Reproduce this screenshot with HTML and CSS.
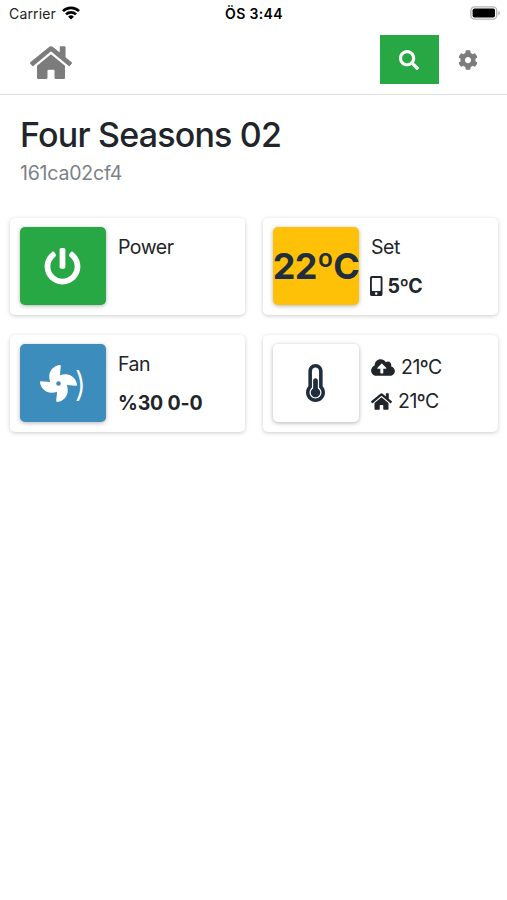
FILE: index.html
```html
<!DOCTYPE html>
<html lang="en">
<head>
<meta charset="utf-8">
<title>Four Seasons 02</title>
<link rel="stylesheet" href="styles.css">
</head>
<body>
<svg class="symbols" aria-hidden="true">
  <symbol id="home" viewBox="0 0 576 512"><path d="M280.37 148.26L96 300.11V464a16 16 0 0 0 16 16l112.06-.29a16 16 0 0 0 15.92-16V368a16 16 0 0 1 16-16h64a16 16 0 0 1 16 16v95.64a16 16 0 0 0 16 16.05L464 480a16 16 0 0 0 16-16V300L295.67 148.26a12.19 12.19 0 0 0-15.3 0zM571.6 251.47L488 182.56V44.05a12 12 0 0 0-12-12h-56a12 12 0 0 0-12 12v72.61L318.47 43a48 48 0 0 0-61 0L4.34 251.47a12 12 0 0 0-1.6 16.9l25.5 31A12 12 0 0 0 45.15 301l235.22-193.74a12.19 12.19 0 0 1 15.3 0L530.9 301a12 12 0 0 0 16.9-1.6l25.5-31a12 12 0 0 0-1.7-16.93z"/></symbol>
</svg>
<div class="status">
  <div class="carrier"><span>Carrier</span>
    <svg class="wifi" viewBox="0 0 18 14" fill="none" stroke="#000" stroke-width="2.7"><path d="M1 5.1a11.3 11.3 0 0 1 16 0M4 8.4a7.1 7.1 0 0 1 10 0"/><path d="M9 13.6L6.1 10.8a4.1 4.1 0 0 1 5.8 0z" fill="#000" stroke="none"/></svg>
  </div>
  <div class="clock">ÖS 3:44</div>
  <svg class="battery" viewBox="0 0 31 14"><rect x=".9" y=".9" width="25.8" height="12.2" rx="3.6" fill="#fff" stroke="#b4b4b4" stroke-width="1.4"/><rect x="2.6" y="2.5" width="22.4" height="9" rx="1.8" fill="#000"/><path d="M28.4 5v4.2c2-.7 2-3.5 0-4.2z" fill="#aaa"/></svg>
</div>
<header class="navbar">
  <svg class="nav-home"><use href="#home"/></svg>
  <div class="search"><svg viewBox="0 0 512 512"><path d="M505 442.7L405.3 343c-4.5-4.5-10.6-7-17-7H372c27.6-35.3 44-79.7 44-128C416 93.1 322.9 0 208 0S0 93.1 0 208s93.1 208 208 208c48.3 0 92.7-16.4 128-44v16.3c0 6.4 2.5 12.5 7 17l99.7 99.7c9.4 9.4 24.6 9.4 33.9 0l28.3-28.3c9.4-9.4 9.4-24.6.1-34zM208 336c-70.7 0-128-57.2-128-128 0-70.7 57.2-128 128-128 70.7 0 128 57.2 128 128 0 70.7-57.2 128-128 128z"/></svg></div>
  <svg class="cog" viewBox="0 0 512 512"><path d="M487.4 315.7l-42.6-24.6c4.3-23.2 4.3-47 0-70.2l42.6-24.6c4.9-2.8 7.1-8.6 5.5-14-11.1-35.6-30-67.8-54.7-94.6-3.8-4.1-10-5.1-14.8-2.3L380.8 110c-17.9-15.4-38.5-27.3-60.8-35.1V25.8c0-5.6-3.9-10.5-9.4-11.7-36.7-8.2-74.3-7.8-109.2 0-5.5 1.2-9.4 6.1-9.4 11.7V75c-22.2 7.9-42.8 19.8-60.8 35.1L88.7 85.5c-4.9-2.8-11-1.9-14.8 2.3-24.7 26.7-43.6 58.9-54.7 94.6-1.7 5.4.6 11.2 5.5 14L67.3 221c-4.3 23.2-4.3 47 0 70.2l-42.6 24.6c-4.9 2.8-7.1 8.6-5.5 14 11.1 35.6 30 67.8 54.7 94.6 3.8 4.1 10 5.1 14.8 2.3l42.6-24.6c17.9 15.4 38.5 27.3 60.8 35.1v49.2c0 5.6 3.9 10.5 9.4 11.7 36.7 8.2 74.3 7.8 109.2 0 5.5-1.2 9.4-6.1 9.4-11.7v-49.2c22.2-7.9 42.8-19.8 60.8-35.1l42.6 24.6c4.9 2.8 11 1.9 14.8-2.3 24.7-26.7 43.6-58.9 54.7-94.6 1.5-5.5-.7-11.3-5.6-14.1zM256 336c-44.1 0-80-35.9-80-80s35.9-80 80-80 80 35.9 80 80-35.9 80-80 80z"/></svg>
</header>
<main>
  <h1>Four Seasons 02</h1>
  <p class="device">161ca02cf4</p>
  <div class="cards">
    <section class="card">
      <div class="tile green"><svg class="power" viewBox="0 0 512 512"><path d="M400 54.1c63 45 104 118.6 104 201.9 0 136.8-110.8 247.7-247.5 248C120 504.3 8.2 393 8 256.4 7.9 173.1 48.9 99.3 111.8 54.2c11.7-8.3 28-4.8 35 7.7L162.6 90c5.9 10.5 3.1 23.8-6.6 31-41.5 30.8-68 79.6-68 134.9-.1 92.3 74.5 168.1 168 168.1 91.6 0 168.6-74.2 168-169.1-.3-51.8-24.7-101.8-68.1-134-9.7-7.2-12.4-20.5-6.5-30.9l15.8-28.1c7-12.4 23.2-16.1 34.8-7.8zM296 264V24c0-13.3-10.7-24-24-24h-32c-13.3 0-24 10.7-24 24v240c0 13.3 10.7 24 24 24h32c13.3 0 24-10.7 24-24z"/></svg></div>
      <div class="info"><div class="label">Power</div></div>
    </section>
    <section class="card">
      <div class="tile yellow"><span class="target">22ºC</span></div>
      <div class="info"><div class="label">Set</div>
        <div class="value"><svg class="mobile" viewBox="0 0 320 512"><path d="M272 0H48C21.5 0 0 21.5 0 48v416c0 26.5 21.5 48 48 48h224c26.5 0 48-21.5 48-48V48c0-26.5-21.5-48-48-48zM160 480c-17.7 0-32-14.3-32-32s14.3-32 32-32 32 14.3 32 32-14.3 32-32 32zm112-108c0 6.6-5.4 12-12 12H60c-6.6 0-12-5.4-12-12V60c0-6.6 5.4-12 12-12h200c6.6 0 12 5.4 12 12v312z"/></svg><span>5ºC</span></div></div>
    </section>
    <section class="card">
      <div class="tile blue"><svg class="fan" viewBox="0 0 512 512"><path d="M352.57 128c-28.09 0-54.09 4.52-77.06 12.86l12.41-123.11C289 7.31 279.81-1.18 269.33.13 189.63 10.13 128 77.64 128 159.43c0 28.09 4.52 54.09 12.86 77.06L17.75 224.08C7.31 223-1.18 232.19.13 242.67c10 79.7 77.51 141.33 159.3 141.33 28.09 0 54.09-4.52 77.06-12.86l-12.41 123.11c-1.05 10.43 8.11 18.93 18.59 17.62 79.7-10 141.33-77.51 141.33-159.3 0-28.09-4.52-54.09-12.86-77.06l123.11 12.41c10.44 1.05 18.93-8.11 17.62-18.59-10-79.7-77.51-141.33-159.3-141.33zM256 288a32 32 0 1 1 32-32 32 32 0 0 1-32 32z"/></svg><span class="paren">)</span></div>
      <div class="info"><div class="label">Fan</div><div class="value speed">%30 0-0</div></div>
    </section>
    <section class="card">
      <div class="tile white"><svg class="thermo" viewBox="0 0 256 512"><path d="M192 384c0 35.346-28.654 64-64 64s-64-28.654-64-64c0-23.685 12.876-44.349 32-55.417V224c0-17.673 14.327-32 32-32s32 14.327 32 32v104.583c19.124 11.068 32 31.732 32 55.417zm32-84.653c19.912 22.563 32 52.194 32 84.653 0 70.696-57.303 128-128 128-.299 0-.609-.001-.909-.003C56.789 511.509-.357 453.636.002 383.333.166 351.135 12.225 321.755 32 299.347V96c0-53.019 42.981-96 96-96s96 42.981 96 96v203.347zM208 384c0-34.339-19.37-52.19-32-66.502V96c0-26.467-21.533-48-48-48S80 69.533 80 96v221.498c-12.732 14.428-31.825 32.1-31.999 66.08-.224 43.876 35.563 80.116 79.423 80.42L128 464c44.112 0 80-35.888 80-80z"/></svg></div>
      <div class="info readings">
        <div class="reading"><svg class="cloud" viewBox="0 0 640 512"><path d="M537.6 226.6c4.1-10.7 6.4-22.4 6.4-34.6 0-53-43-96-96-96-19.7 0-38.1 6-53.3 16.2C367 64.2 315.3 32 256 32c-88.4 0-160 71.6-160 160 0 2.7.1 5.4.2 8.1C40.2 219.8 0 273.2 0 336c0 79.5 64.5 144 144 144h368c70.7 0 128-57.3 128-128 0-61.9-44-113.6-102.4-125.4zM393.4 288H328v112c0 8.8-7.2 16-16 16h-48c-8.8 0-16-7.2-16-16V288h-65.4c-14.3 0-21.4-17.2-11.3-27.3l105.4-105.4c6.2-6.2 16.4-6.2 22.6 0l105.4 105.4c10.1 10.1 2.9 27.3-11.3 27.3z"/></svg><span>21ºC</span></div>
        <div class="reading"><svg class="house"><use href="#home"/></svg><span>21ºC</span></div>
      </div>
    </section>
  </div>
</main>
</body>
</html>
```
FILE: styles.css
```css
* { box-sizing: border-box; }
body { margin: 0; min-height: 100vh; background: #fff; color: #212529; font-family: Inter, "Liberation Sans", sans-serif; font-size: 19.5px; }
svg { display: block; flex: none; fill: currentColor; }
.symbols { position: absolute; width: 0; height: 0; }
.status { display: grid; grid-template-columns: 1fr auto 1fr; align-items: center; height: 27px; padding: 0 6px 0 9px; color: #000; }
.carrier { display: flex; align-items: center; gap: 6px; font-size: 14px; letter-spacing: .15px; color: #222; }
.wifi { width: 18px; height: 14px; fill: none; margin-top: -1px; }
.clock { margin-left: -2px; font-size: 14px; font-weight: 600; letter-spacing: .35px; }
.battery { width: 31px; height: 14px; justify-self: end; margin-top: -1px; }
.navbar { display: flex; align-items: center; height: 68px; padding: 0 29px 0 30px; border-bottom: 1px solid #dcdfe1; color: #7c7c7c; }
.nav-home { width: 42px; height: 37.3px; margin-top: 4px; }
.search { display: flex; align-items: center; justify-content: center; width: 59px; height: 49px; margin: -2px 19px 0 auto; background: #28a745; color: #fff; }
.search svg { width: 20px; height: 20px; margin-right: 1px; }
.cog { width: 20px; height: 20px; margin-top: -2px; }
main { padding: 18px 9px 0 10px; }
h1 { margin: 0 10px; font-size: 34px; font-weight: 500; line-height: 43px; letter-spacing: -.8px; white-space: nowrap; }
.device { margin: 4px 10px 0; color: #7b8288; line-height: 26px; letter-spacing: -.2px; }
.cards { display: grid; grid-template-columns: 1fr 1fr; gap: 20px 18px; margin-top: 32px; }
.card { display: flex; height: 97px; padding: 9px 10px; border-radius: 5px; box-shadow: 0 1px 4px rgba(0,0,0,.2); }
.tile { display: flex; align-items: center; justify-content: center; flex: none; width: 86px; height: 78px; border-radius: 5px; box-shadow: 0 1px 4px rgba(0,0,0,.3); color: #fff; }
.green { background: #28a745; }
.yellow { background: #ffc107; color: #1f2d3d; }
.blue { background: #3c8dbc; }
.white { background: #fff; color: #1f2d3d; }
.power, .fan { width: 37px; height: 37px; }
.power { margin-right: 2px; }
.fan { margin-right: 2px; }
.paren { font-size: 34px; line-height: 44px; margin: 2px 0 0 -4px; font-weight: 300; }
.target { font-size: 36px; font-weight: 700; letter-spacing: -.7px; white-space: nowrap; }
.thermo { width: 19px; height: 38px; margin: -1px 1px 0 0; }
.info { padding-left: 12px; letter-spacing: -.5px; }
.label { line-height: 24px; }
.info .label { margin-top: 8px; }
.value { display: flex; align-items: center; gap: 5px; margin-top: 15px; line-height: 24px; font-weight: 650; }
.value svg { margin-left: -1px; }
.speed { letter-spacing: -.15px; }
.mobile { width: 12.5px; height: 20px; }
.readings { padding-top: 11px; }
.reading { display: flex; align-items: center; gap: 6px; height: 24px; }
.reading + .reading { margin-top: 10px; }
.cloud { width: 24px; height: 19px; }
.house { width: 21px; height: 19px; }
```
